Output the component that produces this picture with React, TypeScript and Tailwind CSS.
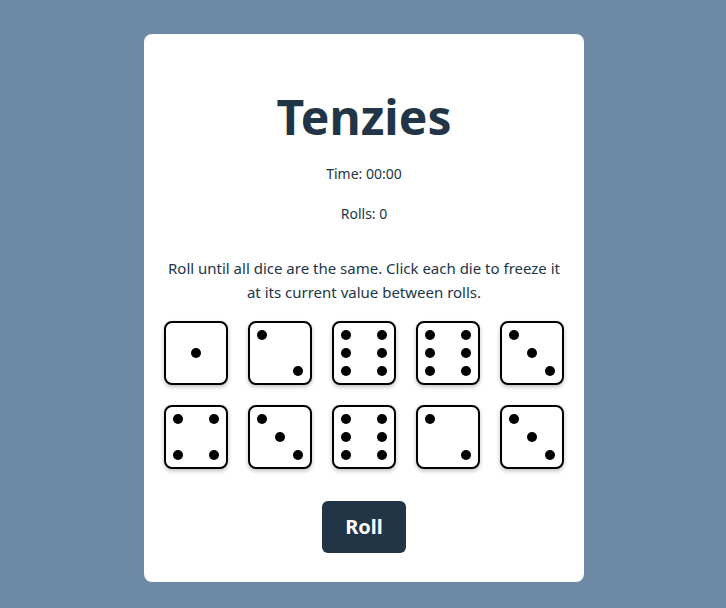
import { useState } from "react";

const pipMap: Record<number, number[]> = {
  1: [4],
  2: [0, 8],
  3: [0, 4, 8],
  4: [0, 2, 6, 8],
  5: [0, 2, 4, 6, 8],
  6: [0, 2, 3, 5, 6, 8],
};

const Die = ({ value }: { value: number }) => {
  const pips = pipMap[value];
  return (
    <button className="w-16 h-16 border-2 border-black rounded-lg bg-white shadow-[0_2px_4px_rgba(0,0,0,0.25)] p-[3px] grid grid-cols-3 grid-rows-3">
      {Array.from({ length: 9 }).map((_, i) => (
        <span key={i} className="flex items-center justify-center">
          {pips.includes(i) && <span className="w-[10px] h-[10px] rounded-full bg-black" />}
        </span>
      ))}
    </button>
  );
};

const App = () => {
  const [dice] = useState([1, 2, 6, 6, 3, 4, 3, 6, 2, 3]);

  return (
    <div className="min-h-[608px] bg-[#6e89a3] flex justify-center pt-[34px] pl-[2px] font-['Noto_Sans',sans-serif]">
      <main className="w-[440px] h-[548px] bg-white rounded-lg flex flex-col items-center text-[#213547]">
        <h1 className="text-[48px] font-bold leading-none mt-[59px]">Tenzies</h1>
        <p className="text-[14px] mt-[22px]">Time: 00:00</p>
        <p className="text-[14px] mt-[19px]">Rolls: 0</p>
        <p className="text-[15px] leading-6 text-center px-5 mt-[32px]">
          Roll until all dice are the same. Click each die to freeze it at its current value between rolls.
        </p>
        <div className="grid grid-cols-5 gap-5 mt-[17px]">
          {dice.map((d, i) => (
            <Die key={i} value={d} />
          ))}
        </div>
        <button className="mt-[32px] w-[84px] h-[52px] bg-[#213547] text-white text-[20px] font-bold rounded-md">
          Roll
        </button>
      </main>
    </div>
  );
};

export default App;
